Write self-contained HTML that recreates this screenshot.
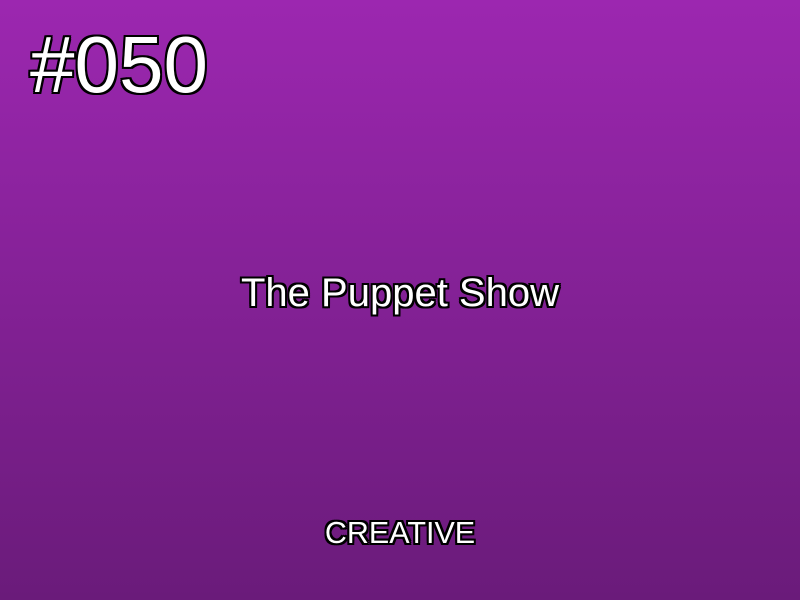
<!DOCTYPE html>
<html><head><style>
html,body{margin:0;padding:0}
body{width:800px;height:600px;overflow:hidden;position:relative;background:linear-gradient(#9c27b0,#6a1b7a);font-family:"Liberation Sans",Arial,sans-serif;color:#fff}
.t{position:absolute;white-space:nowrap;line-height:1;text-shadow:-2px -2px 0 #000,2px -2px 0 #000,-2px 2px 0 #000,2px 2px 0 #000,0 2px 0 #000,0 -2px 0 #000,2px 0 0 #000,-2px 0 0 #000}
#n{left:30px;top:25px;font-size:80px}
#a{left:0;width:800px;text-align:center;top:273px;font-size:40px}
#c{left:0;width:800px;text-align:center;top:518px;font-size:30.5px}
</style></head><body>
<div class="t" id="n">#050</div>
<div class="t" id="a">The Puppet Show</div>
<div class="t" id="c">CREATIVE</div>
</body></html>
